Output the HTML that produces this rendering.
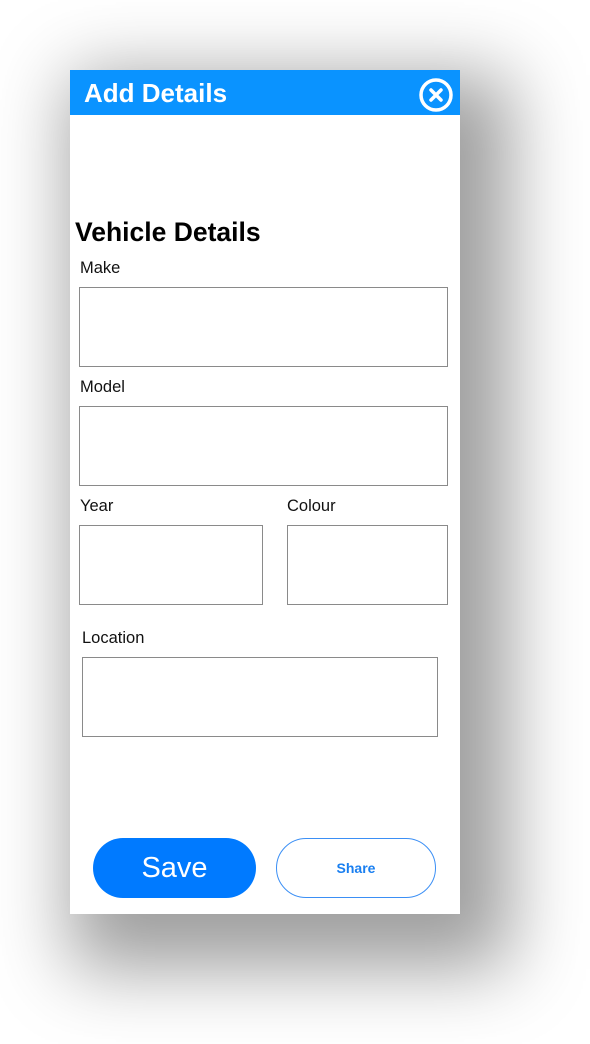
<!DOCTYPE html>
<html><head><style>
body{margin:0;width:590px;height:1044px;background:#fff;position:relative;overflow:hidden;font-family:"Liberation Sans",sans-serif}
.card{position:absolute;left:70px;top:70px;width:390px;height:844px;background:#fff;box-shadow:25px 30px 70px 25px rgba(0,0,0,0.38)}
.hdr{position:absolute;left:70px;top:70px;width:390px;height:45px;background:#0a93ff}
.hdr span{position:absolute;left:14px;top:8px;color:#fff;font-weight:bold;font-size:26px}
.a{position:absolute}
.lbl{position:absolute;font-size:16.5px;color:#111}
.box{position:absolute;border:1px solid #8a8a8a;box-sizing:border-box}
</style></head><body>
<div class="card"></div>
<div class="hdr"><span>Add Details</span>
<svg class="a" style="left:348px;top:8px" width="36" height="36" viewBox="0 0 36 36"><circle cx="18" cy="17" r="15" fill="none" stroke="#fff" stroke-width="3.5"/><path d="M13 12L23 22M23 12L13 22" stroke="#fff" stroke-width="3.5" stroke-linecap="round"/></svg>
</div>
<div class="a" style="left:75px;top:217px;font-size:26.5px;font-weight:bold;color:#000">Vehicle Details</div>
<div class="lbl" style="left:80px;top:259px">Make</div>
<div class="box" style="left:79px;top:287px;width:369px;height:80px"></div>
<div class="lbl" style="left:80px;top:378px">Model</div>
<div class="box" style="left:79px;top:406px;width:369px;height:80px"></div>
<div class="lbl" style="left:80px;top:497px">Year</div>
<div class="box" style="left:79px;top:525px;width:184px;height:80px"></div>
<div class="lbl" style="left:287px;top:497px">Colour</div>
<div class="box" style="left:287px;top:525px;width:161px;height:80px"></div>
<div class="lbl" style="left:82px;top:629px">Location</div>
<div class="box" style="left:82px;top:657px;width:356px;height:80px"></div>
<div class="a" style="left:93px;top:838px;width:163px;height:60px;border-radius:30px;background:#007aff;color:#fff;font-size:29px;text-align:center;line-height:60px">Save</div>
<div class="a" style="left:276px;top:838px;width:160px;height:60px;border-radius:30px;border:1px solid #3b8ff5;box-sizing:border-box;color:#1a7ff0;font-size:14px;font-weight:bold;text-align:center;line-height:58px">Share</div>
</body></html>
